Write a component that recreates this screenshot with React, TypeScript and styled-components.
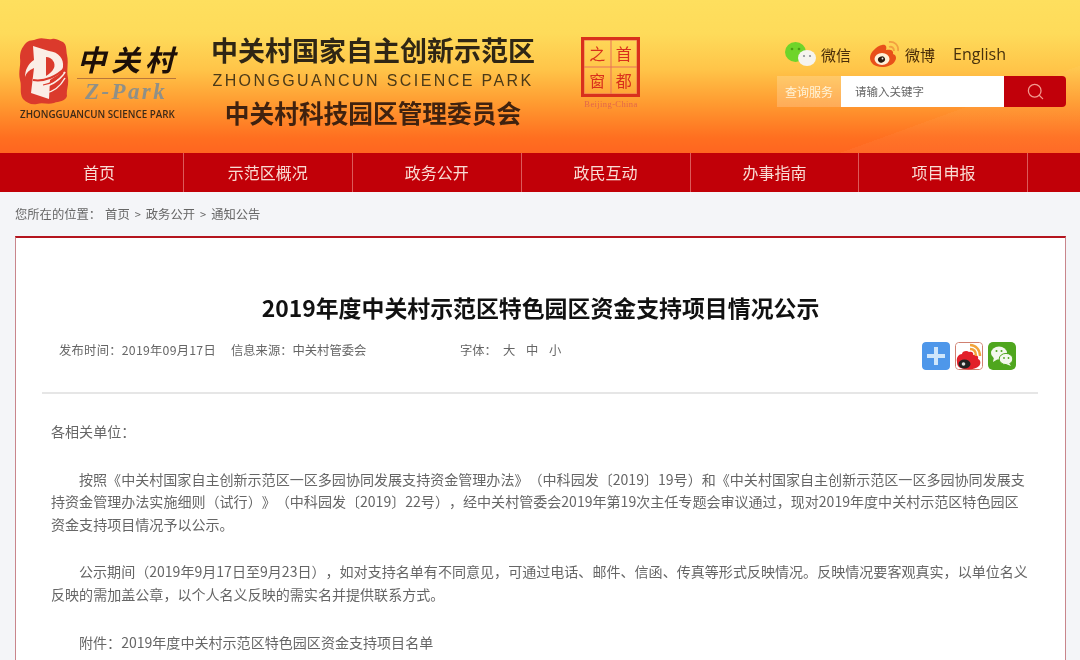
import React from 'react';
import styled, { createGlobalStyle } from 'styled-components';
import { Search } from 'lucide-react';

const GlobalStyle = createGlobalStyle`
  html, body {
    margin: 0;
    height: 660px;
    overflow: hidden;
    background: #f4f5f8;
    font-family: "Noto Sans CJK SC", "Noto Sans", sans-serif;
  }
`;

const Page = styled.div`
  width: 1080px;
  height: 660px;
  overflow: hidden;
  filter: blur(0.4px);
`;

const Header = styled.header`
  height: 153px;
  display: flex;
  background:
    linear-gradient(160deg, transparent 84%, rgba(255, 255, 255, 0.03) 84%),
    linear-gradient(180deg, #fedf5e 0%, #fedb5a 22%, #ffc549 45%, #ff9a30 68%, #ff6f20 90%, #ff6520 100%);
`;

const LogoBlock = styled.div`
  width: 191px;
  margin-left: 19px;
  padding-top: 38px;
  flex-shrink: 0;
`;

const LogoTop = styled.div`
  display: flex;
  gap: 8px;
`;

const LogoSide = styled.div`
  width: 99px;
`;

const LogoHan = styled.div`
  font-size: 29px;
  line-height: 40px;
  font-weight: 700;
  font-style: italic;
  letter-spacing: 5px;
  color: #1d0f08;
  border-bottom: 1px solid #b8763a;
  white-space: nowrap;
`;

const LogoPark = styled.div`
  font-family: "Liberation Serif", serif;
  font-style: italic;
  font-weight: 700;
  font-size: 23px;
  line-height: 25px;
  letter-spacing: 2.4px;
  color: #8f9088;
  padding-left: 8px;
  white-space: nowrap;
`;

const LogoCaption = styled.div`
  margin: 3px 0 0 1px;
  font-family: "Open Sans", sans-serif;
  font-size: 9.8px;
  line-height: 13px;
  font-weight: 600;
  color: #3d2a18;
  white-space: nowrap;
`;

const TitleBlock = styled.div`
  width: 326px;
  padding-top: 32px;
  text-align: center;
  flex-shrink: 0;
`;

const TitleMain = styled.div`
  font-size: 27px;
  line-height: 36px;
  font-weight: 700;
  color: #2f2615;
  white-space: nowrap;
`;

const TitleEn = styled.div`
  font-family: "Liberation Sans", sans-serif;
  font-size: 16px;
  line-height: 20px;
  letter-spacing: 2.4px;
  color: #4b3a18;
  margin-top: 3px;
  white-space: nowrap;
`;

const TitleSub = styled.div`
  font-size: 24.7px;
  line-height: 34px;
  font-weight: 700;
  color: #40220f;
  margin-top: 4px;
  white-space: nowrap;
`;

const SealBlock = styled.div`
  width: 68px;
  margin-left: 45px;
  padding-top: 37px;
  flex-shrink: 0;
`;

const Seal = styled.div`
  width: 59px;
  height: 60px;
  box-sizing: border-box;
  border: 3px solid #d9301c;
  display: grid;
  grid-template-columns: 1fr 1fr;
  grid-template-rows: 1fr 1fr;
`;

const SealCell = styled.span`
  box-shadow: inset 0 0 0 0.5px #e8705a;
  color: #d9301c;
  font-size: 16px;
  line-height: 26px;
  text-align: center;
  overflow: hidden;
`;

const SealCaption = styled.div`
  width: 68px;
  margin-left: -4px;
  margin-top: 1px;
  font-family: "Liberation Serif", serif;
  font-size: 8.5px;
  line-height: 12px;
  text-align: center;
  letter-spacing: 0.4px;
  color: #e2664a;
`;

const RightBlock = styled.div`
  margin-left: 128px;
  padding-top: 40px;
  width: 289px;
  flex-shrink: 0;
`;

const LinkRow = styled.div`
  height: 28px;
  display: flex;
  align-items: center;
  padding-left: 8px;
  color: #4a2c08;
`;

const SocialLink = styled.span<{ $gap: number }>`
  display: flex;
  align-items: center;
  gap: 5px;
  font-size: 15px;
  margin-right: ${p => p.$gap}px;
`;

const EnglishLink = styled.span`
  font-family: "Open Sans", sans-serif;
  font-size: 16px;
  color: #46300d;
`;

const SearchBar = styled.div`
  margin-top: 8px;
  height: 31px;
  display: flex;
`;

const SearchLabel = styled.span`
  width: 64px;
  background: rgba(255, 255, 255, 0.2);
  color: #fff3d8;
  font-size: 12px;
  line-height: 31px;
  text-align: center;
`;

const SearchInput = styled.span`
  width: 163px;
  background: #fff;
  color: #666;
  font-size: 11.5px;
  line-height: 31px;
  padding-left: 14px;
  box-sizing: border-box;
`;

const SearchButton = styled.span`
  width: 62px;
  background: #c1000a;
  border-radius: 0 4px 4px 0;
  display: flex;
  align-items: center;
  justify-content: center;
  color: #f29a90;
`;

const Nav = styled.nav`
  height: 39px;
  padding-left: 15px;
  display: flex;
  background: #c10008;
`;

const NavItem = styled.a`
  width: 168.9px;
  box-sizing: border-box;
  border-right: 1px solid #dc5a5a;
  color: #f9dcd4;
  font-size: 16px;
  line-height: 39px;
  text-align: center;
`;

const Crumbs = styled.div`
  height: 44px;
  padding-left: 15px;
  display: flex;
  align-items: center;
  font-size: 12.3px;
  color: #666;
  white-space: nowrap;
`;

const CrumbLabel = styled.span`
  margin-right: 4px;
`;

const CrumbArrow = styled.span`
  margin: 0 5px;
  font-size: 11px;
`;

const Card = styled.main`
  margin: 0 14px 0 15px;
  height: 500px;
  box-sizing: border-box;
  background: #fff;
  border: 1px solid #c9868c;
  border-top: 2px solid #b4141e;
`;

const ArticleTitle = styled.h1`
  margin: 53px 0 0;
  font-size: 22.9px;
  line-height: 32px;
  font-weight: 700;
  text-align: center;
  color: #111;
`;

const MetaRow = styled.div`
  margin: 13px 26px 0 43px;
  height: 57px;
  display: flex;
  align-items: flex-start;
  font-size: 12.3px;
  line-height: 28px;
  color: #666;
  white-space: nowrap;
`;

const MetaItem = styled.span<{ $width: number; $spaced?: boolean }>`
  width: ${p => p.$width}px;
  letter-spacing: ${p => (p.$spaced ? '0.25px' : '0')};
`;

const FontSizeOption = styled.span`
  width: 23px;
`;

const ShareIcons = styled.div`
  margin-left: auto;
  padding-top: 6px;
  display: flex;
  gap: 5px;
  margin-right: 23px;
`;

const Divider = styled.hr`
  margin: -1px 27px 0 26px;
  border: 0;
  border-top: 2px solid #e6e6e6;
`;

const ArticleBody = styled.div`
  padding: 26px 33px 0 35px;
  font-size: 14.05px;
  line-height: 22.6px;
  color: #666;
  text-spacing-trim: space-all;
`;

const Paragraph = styled.p<{ $indent?: boolean }>`
  margin: 0 0 25px;
  text-indent: ${p => (p.$indent ? '28px' : '0')};
`;

const Bubble = styled.svg`
  display: block;
  flex-shrink: 0;
`;

const WechatIcon = () => (
  <Bubble width="31" height="26" viewBox="0 0 31 26">
    <ellipse cx="10.5" cy="11" rx="10.5" ry="10" fill="#6fd42a" />
    <circle cx="7" cy="8" r="1.3" fill="#4a9c14" />
    <circle cx="14" cy="8" r="1.3" fill="#4a9c14" />
    <ellipse cx="22" cy="17" rx="9" ry="8" fill="#f6f4ee" />
    <circle cx="19" cy="15" r="1.1" fill="#8a8f98" />
    <circle cx="25" cy="15" r="1.1" fill="#8a8f98" />
  </Bubble>
);

const WeiboIcon = () => (
  <Bubble width="31" height="28" viewBox="0 0 31 28">
    <path d="M1 18 C1 12 8 6 13 5 C17 4 18 7 17 10 C21 9 25 10 24 14 C27 15 28 18 26 21 C24 25 18 27 13 27 C6 27 1 23 1 18Z" fill="#e8501a" />
    <ellipse cx="13" cy="19" rx="7.5" ry="6" fill="#fff1d8" />
    <ellipse cx="12.5" cy="19.5" rx="3.6" ry="3" fill="#2a1a10" transform="rotate(-25 12.5 19.5)" />
    <circle cx="13.5" cy="18.5" r="0.9" fill="#eee" />
    <path d="M20 2 C25 1 30 5 29 11" fill="none" stroke="#f3a040" strokeWidth="1.8" />
    <path d="M20 7 C23 6 25 8 25 11" fill="none" stroke="#f3a040" strokeWidth="1.8" />
  </Bubble>
);

const LogoMark = () => (
  <Bubble width="50" height="67" viewBox="0 0 50 67">
    <path d="M6 6 C10 1 14 3 18 1 C24 -1 28 2 33 1 C38 0 40 3 44 4 C48 7 47 12 48 17 C50 26 47 32 49 40 C50 48 47 52 48 58 C46 64 40 63 35 65 C28 67 24 64 18 66 C12 67 8 65 4 61 C0 55 3 48 1 42 C-1 34 2 28 1 20 C1 13 3 10 6 6Z" fill="#db3a2c" />
    <path d="M14 8 L30 13 C40 14 45 21 44 29 C43 34 40 37 34 40 L31 42 L30 61 L12 55 L15 30 C10 32 7 35 6 39 C6 32 9 26 15 22Z" fill="#fbeee6" />
    <path d="M27 19 C33 19 37 25 35 30 C33 34 30 36 27 38Z" fill="#db3a2c" />
    <path d="M14 42 C26 44 38 38 46 30" fill="none" stroke="#db3a2c" strokeWidth="2" />
    <path d="M20 49 C30 49 40 43 46 34" fill="none" stroke="#fbeee6" strokeWidth="2" />
    <path d="M24 47 C32 46 38 42 44 35" fill="none" stroke="#db3a2c" strokeWidth="1.2" />
    <path d="M26 55 C34 54 41 49 46 40" fill="none" stroke="#fbeee6" strokeWidth="1.5" />
  </Bubble>
);

const ShareSquare = styled.svg`
  display: block;
  border-radius: 4px;
`;

const SharePlus = () => (
  <ShareSquare width="28" height="28" viewBox="0 0 28 28">
    <rect width="28" height="28" rx="3" fill="#4e97ea" />
    <rect x="12" y="5" width="4" height="18" fill="#cfe6fb" />
    <rect x="5" y="12" width="18" height="4" fill="#cfe6fb" />
  </ShareSquare>
);

const ShareWeibo = () => (
  <ShareSquare width="28" height="28" viewBox="0 0 28 28">
    <rect x="0.5" y="0.5" width="27" height="27" rx="3" fill="#fff" stroke="#d08070" />
    <path d="M2 20 C1 15 4 12 7 12 C7 9 12 8 14 10 C17 9 19 11 18 13 C21 12 24 14 23 17 C26 18 26 22 24 24 C21 27 15 28 9 27 C4 26 2 24 2 20Z" fill="#e2202a" />
    <ellipse cx="9.5" cy="22" rx="6" ry="4.5" fill="#222" />
    <circle cx="8.5" cy="22" r="1.8" fill="#ddd" />
    <path d="M15 3 C21 3 25 8 25 14" fill="none" stroke="#f2a33a" strokeWidth="2.4" />
    <path d="M15 7 C19 7 21 10 21 14" fill="none" stroke="#f2a33a" strokeWidth="2.4" />
  </ShareSquare>
);

const ShareWechat = () => (
  <ShareSquare width="28" height="28" viewBox="0 0 28 28">
    <rect width="28" height="28" rx="5" fill="#4fa61e" />
    <ellipse cx="11" cy="11" rx="8" ry="6.5" fill="#f4f8ee" />
    <path d="M6 15 L5 20 L10 17Z" fill="#f4f8ee" />
    <circle cx="8.5" cy="9" r="1" fill="#4fa61e" />
    <circle cx="13.5" cy="9" r="1" fill="#4fa61e" />
    <ellipse cx="18" cy="17" rx="6.8" ry="5.6" stroke="#4fa61e" strokeWidth="1" fill="#f4f8ee" />
    <path d="M21 21 L23 24 L18 22Z" fill="#f4f8ee" />
    <circle cx="16" cy="16" r="0.9" fill="#4fa61e" />
    <circle cx="20.5" cy="16" r="0.9" fill="#4fa61e" />
  </ShareSquare>
);

const navItems = ['首页', '示范区概况', '政务公开', '政民互动', '办事指南', '项目申报'];

const App = () => (
  <Page>
    <GlobalStyle />
    <Header>
      <LogoBlock>
        <LogoTop>
          <LogoMark />
          <LogoSide>
            <LogoHan>中关村</LogoHan>
            <LogoPark>Z-Park</LogoPark>
          </LogoSide>
        </LogoTop>
        <LogoCaption>ZHONGGUANCUN SCIENCE PARK</LogoCaption>
      </LogoBlock>
      <TitleBlock>
        <TitleMain>中关村国家自主创新示范区</TitleMain>
        <TitleEn>ZHONGGUANCUN SCIENCE PARK</TitleEn>
        <TitleSub>中关村科技园区管理委员会</TitleSub>
      </TitleBlock>
      <SealBlock>
        <Seal>
          <SealCell>之</SealCell>
          <SealCell>首</SealCell>
          <SealCell>窗</SealCell>
          <SealCell>都</SealCell>
        </Seal>
        <SealCaption>Beijing-China</SealCaption>
      </SealBlock>
      <RightBlock>
        <LinkRow>
          <SocialLink $gap={18}><WechatIcon />微信</SocialLink>
          <SocialLink $gap={18}><WeiboIcon />微博</SocialLink>
          <EnglishLink>English</EnglishLink>
        </LinkRow>
        <SearchBar>
          <SearchLabel>查询服务</SearchLabel>
          <SearchInput>请输入关键字</SearchInput>
          <SearchButton><Search size={19} strokeWidth={1.6} /></SearchButton>
        </SearchBar>
      </RightBlock>
    </Header>
    <Nav>
      {navItems.map(item => (
        <NavItem key={item}>{item}</NavItem>
      ))}
    </Nav>
    <Crumbs>
      <CrumbLabel>您所在的位置：</CrumbLabel>
      首页<CrumbArrow>&gt;</CrumbArrow>政务公开<CrumbArrow>&gt;</CrumbArrow>通知公告
    </Crumbs>
    <Card>
      <ArticleTitle>2019年度中关村示范区特色园区资金支持项目情况公示</ArticleTitle>
      <MetaRow>
        <MetaItem $width={172} $spaced>发布时间：2019年09月17日</MetaItem>
        <MetaItem $width={229}>信息来源：中关村管委会</MetaItem>
        <MetaItem $width={43}>字体：</MetaItem>
        <FontSizeOption>大</FontSizeOption>
        <FontSizeOption>中</FontSizeOption>
        <FontSizeOption>小</FontSizeOption>
        <ShareIcons>
          <SharePlus />
          <ShareWeibo />
          <ShareWechat />
        </ShareIcons>
      </MetaRow>
      <Divider />
      <ArticleBody>
        <Paragraph>各相关单位：</Paragraph>
        <Paragraph $indent>
          按照《中关村国家自主创新示范区一区多园协同发展支持资金管理办法》（中科园发〔2019〕19号）和《中关村国家自主创新示范区一区多园协同发展支持资金管理办法实施细则（试行）》（中科园发〔2019〕22号），经中关村管委会2019年第19次主任专题会审议通过，现对2019年度中关村示范区特色园区资金支持项目情况予以公示。
        </Paragraph>
        <Paragraph $indent>
          公示期间（2019年9月17日至9月23日），如对支持名单有不同意见，可通过电话、邮件、信函、传真等形式反映情况。反映情况要客观真实，以单位名义反映的需加盖公章，以个人名义反映的需实名并提供联系方式。
        </Paragraph>
        <Paragraph $indent>附件：2019年度中关村示范区特色园区资金支持项目名单</Paragraph>
      </ArticleBody>
    </Card>
  </Page>
);

export default App;
